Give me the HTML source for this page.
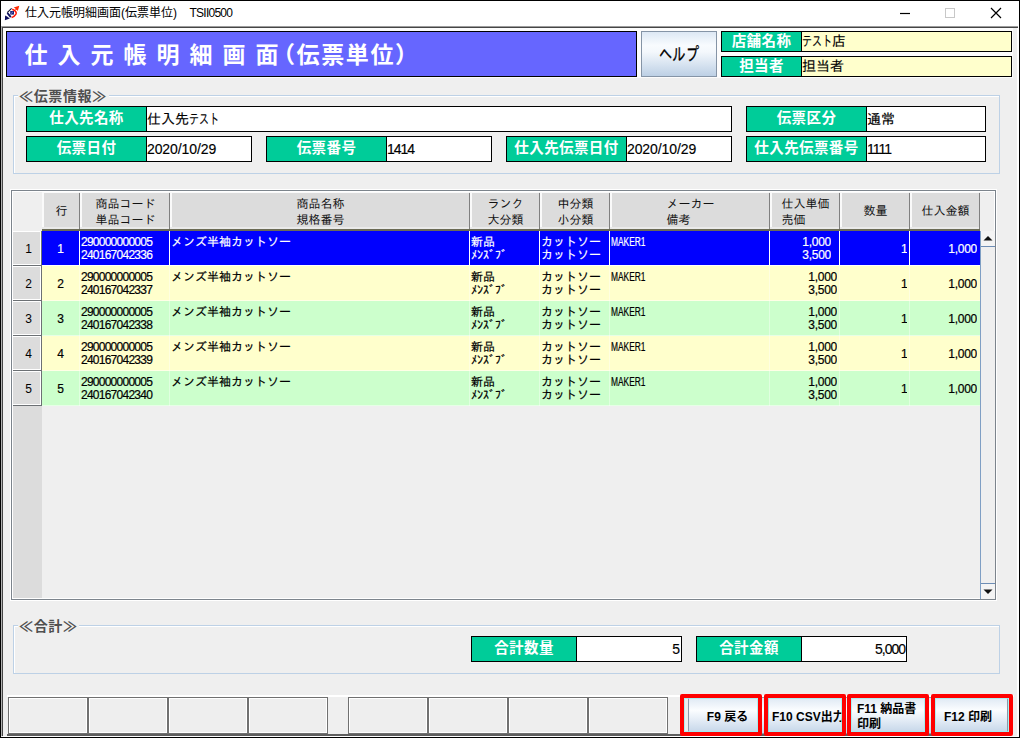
<!DOCTYPE html>
<html lang="ja">
<head>
<meta charset="utf-8">
<title>仕入元帳明細画面(伝票単位) TSII0500</title>
<style>
html,body{margin:0;padding:0;}
body{width:1020px;height:738px;position:relative;overflow:hidden;background:#efefef;
 font-family:"Liberation Sans","IPAGothic","Noto Sans CJK JP",sans-serif;font-size:12px;color:#000;}
.a{position:absolute;box-sizing:border-box;}
.ui{font-family:"Liberation Sans","Noto Sans CJK JP",sans-serif;}
.g{font-family:"Liberation Sans","IPAGothic",sans-serif;}
#ttext{left:25px;top:1px;height:25px;line-height:25px;font-size:12px;white-space:pre;}
.bt{top:1px;height:44px;line-height:45px;font-size:23px;font-weight:bold;color:#fff;white-space:nowrap;
 font-family:"Liberation Sans","Noto Sans CJK JP",sans-serif;}
.lab{background:#00cc99;border:1px solid #000;color:#fff;font-weight:bold;font-size:14.5px;text-align:center;
 font-family:"Liberation Sans","Noto Sans CJK JP",sans-serif;white-space:nowrap;overflow:hidden;letter-spacing:0.4px;}
.val{background:#fff;border:1px solid #000;border-left:none;font-size:14px;-webkit-text-stroke:0.15px;white-space:nowrap;overflow:hidden;
 font-family:"Liberation Sans","IPAGothic",sans-serif;}
.fs{border:1px solid #bdd1e6;}
.leg{background:#efefef;color:#505050;font-weight:bold;font-size:14px;letter-spacing:0.65px;white-space:nowrap;line-height:16px;height:16px;
 font-family:"Liberation Sans","Noto Sans CJK JP",sans-serif;}
.hd{background:#dcdcdc;text-align:center;font-size:12px;line-height:16px;color:#111;
 font-family:"Liberation Sans","IPAGothic",sans-serif;white-space:nowrap;overflow:hidden;}
.rh{background:#dcdcdc;text-align:center;font-size:12px;line-height:36px;padding-left:3px;border-bottom:1px solid #6c7074;border-right:1px solid #6c7074;box-shadow:inset 0 1px 0 #fff, inset -1px -1px 0 #fff;}
.c{font-size:12px;line-height:13px;white-space:nowrap;overflow:hidden;-webkit-text-stroke:0.2px;
 font-family:"Liberation Sans","IPAGothic",sans-serif;}
.num{letter-spacing:-0.75px;}
.num2{letter-spacing:-0.25px;}
.r{text-align:right;}
.fb{border:1px solid #707070;background:#eeeeee;box-shadow:inset 1px 1px 0 #fff, inset -1px -1px 0 #fff;}
.ab{border:1px solid #8a9aaa;background:linear-gradient(#dfe9f4 0%,#fbfdff 35%,#e6eef7 60%,#c4d5e8 100%);
 font-family:"Liberation Sans","Noto Sans CJK JP",sans-serif;font-weight:bold;font-size:12px;}
.red{border:4px solid #ff0000;border-radius:2px;box-shadow:inset 0 0 0 1px rgba(150,240,240,0.75);}
.k{display:inline-block;transform:scaleX(0.72);transform-origin:0 50%;white-space:nowrap;}
.m{display:inline-block;transform:scaleX(0.70);transform-origin:0 50%;white-space:nowrap;}
</style>
</head>
<body>
<div class="a " style="left:0px;top:0px;width:1020px;height:738px;background:#000;"></div>
<div class="a " style="left:1px;top:1px;width:1018px;height:25px;background:#fff;"></div>
<div class="a " style="left:1px;top:26px;width:1018px;height:711px;background:#efefef;"></div>
<div class="a " style="left:1px;top:26px;width:1017px;height:1px;background:#9c9c9c;"></div>
<div class="a " style="left:2px;top:27px;width:1016px;height:1px;background:#454545;"></div>
<div class="a " style="left:1px;top:26px;width:1px;height:710px;background:#b0b0b0;"></div>
<div class="a " style="left:2px;top:27px;width:1px;height:709px;background:#454545;"></div>
<div class="a " style="left:3px;top:28px;width:1010px;height:50px;background:#fcfcfc;"></div>
<div class="a " style="left:1017px;top:28px;width:2px;height:709px;background:#fff;"></div>
<div class="a " style="left:1018px;top:26px;width:1px;height:2px;background:#fff;"></div>
<div class="a " style="left:3px;top:736px;width:1015px;height:1px;background:#fff;"></div>
<svg class="a" style="left:0px;top:0px" width="26" height="26" viewBox="0 0 26 26">
<path d="M12.2 9.3 Q17.6 11.6 15.8 14.4 Q14.2 16.9 11.6 17.6" fill="none" stroke="#ff1400" stroke-width="1.5"/>
<path d="M19.3 5.7 L13.6 7.4 L15.6 8.6 L14.8 9.6 L17 10 L17.8 11 Z" fill="#ff2a00"/>
<path d="M11.6 8.4 L7.2 12.6" fill="none" stroke="#101030" stroke-width="1.1"/>
<path d="M7.4 13 L10.8 17.2" fill="none" stroke="#0c0c5c" stroke-width="1.9"/>
<path d="M4.9 20.2 L5.1 15.6 L7 16.6 L9.8 18.6 Z" fill="#0c0c5c"/>
<rect x="10.2" y="11" width="3.8" height="3.6" fill="#1a237e"/>
<path d="M11 13.6 L13 11.8" stroke="#8890d0" stroke-width="0.8"/>
</svg>
<div class="a ui" id="ttext">仕入元帳明細画面(伝票単位)</div>
<div class="a ui" style="left:189.5px;top:1px;height:25px;line-height:25px;font-size:12px;letter-spacing:-0.75px;">TSII0500</div>
<svg class="a" style="left:890px;top:1px" width="128" height="25" viewBox="0 0 128 25">
<path d="M10 12.5 H20" stroke="#000" stroke-width="1.2"/>
<rect x="55.5" y="7.5" width="9" height="9" fill="none" stroke="#c8c8c8" stroke-width="1"/>
<path d="M101 7 L111 17 M111 7 L101 17" stroke="#000" stroke-width="1.2"/>
</svg>
<div class="a" style="left:6px;top:31px;width:631px;height:46px;background:#6666ff;border:1px solid #000;">
<div class="a bt" style="left:17.5px;letter-spacing:1.8px;white-space:pre;">仕 入 元 帳 明 細 画 面</div>
<div class="a bt" style="left:265px;letter-spacing:1.6px;">（伝票単位）</div>
</div>
<div class="a" style="left:641px;top:31px;width:76px;height:46px;border:1px solid #8594a6;background:linear-gradient(#dde8f4 0%,#f8fbfe 30%,#f4f8fc 45%,#dbe6f2 70%,#bdd0e5 100%);text-align:center;line-height:45px;font-size:18.5px;font-family:'Liberation Sans','IPAGothic',sans-serif;-webkit-text-stroke:0.3px;"><span style="display:inline-block;width:40px;text-align:left;"><span class="k" style="width:40px;">ヘルプ</span></span></div>
<div class="a lab" style="left:721px;top:31px;width:81px;height:21px;line-height:18px;">店舗名称</div>
<div class="a val" style="left:802px;top:31px;width:210px;height:21px;line-height:19px;background:#ffffcc;font-size:14px;"><span class="k" style="width:30px;">テスト</span>店</div>
<div class="a lab" style="left:721px;top:56px;width:81px;height:21px;line-height:18px;">担当者</div>
<div class="a val" style="left:802px;top:56px;width:210px;height:21px;line-height:19px;background:#ffffcc;">担当者</div>
<div class="a fs" style="left:13px;top:95px;width:987px;height:79px;"></div>
<div class="a " style="left:14px;top:96px;width:985px;height:77px;border:1px solid #fff;border-right:none;border-bottom:none;"></div>
<div class="a leg" style="left:18px;top:88px;width:91px;height:16px;padding-left:1px;">≪伝票情報≫</div>
<div class="a lab" style="left:26px;top:106px;width:121px;height:26px;line-height:23px;">仕入先名称</div>
<div class="a val" style="left:147px;top:106px;width:585px;height:26px;line-height:24px;">仕入先<span class="k" style="width:30px;">テスト</span></div>
<div class="a lab" style="left:746px;top:106px;width:121px;height:26px;line-height:23px;">伝票区分</div>
<div class="a val" style="left:867px;top:106px;width:119px;height:26px;line-height:24px;">通常</div>
<div class="a lab" style="left:26px;top:136px;width:121px;height:26px;line-height:23px;">伝票日付</div>
<div class="a val" style="left:147px;top:136px;width:105px;height:26px;line-height:24px;letter-spacing:-0.1px;">2020/10/29</div>
<div class="a lab" style="left:266px;top:136px;width:121px;height:26px;line-height:23px;">伝票番号</div>
<div class="a val" style="left:387px;top:136px;width:105px;height:26px;line-height:24px;letter-spacing:-1px;">1414</div>
<div class="a lab" style="left:506px;top:136px;width:121px;height:26px;line-height:23px;">仕入先伝票日付</div>
<div class="a val" style="left:627px;top:136px;width:105px;height:26px;line-height:24px;letter-spacing:-0.1px;">2020/10/29</div>
<div class="a lab" style="left:746px;top:136px;width:121px;height:26px;line-height:23px;">仕入先伝票番号</div>
<div class="a val" style="left:867px;top:136px;width:119px;height:26px;line-height:24px;letter-spacing:-1px;">1111</div>
<div class="a " style="left:10px;top:189px;width:987px;height:412px;background:#fff;"></div>
<div class="a " style="left:11px;top:190px;width:985px;height:410px;border:1px solid #7c848c;background:#efefef;"></div>
<div class="a " style="left:12px;top:191px;width:983px;height:408px;border:1px solid #fff;"></div>
<div class="a " style="left:13px;top:192px;width:29px;height:39px;background:#efefef;"></div>
<div class="a " style="left:42px;top:192px;width:37px;height:37px;background:linear-gradient(#fafafa 0,#fafafa 35px,#eaeaea 35px);"></div>
<div class="a hd" style="left:44px;top:193px;width:35px;height:34px;line-height:37px;">行</div>
<div class="a " style="left:79px;top:193px;width:1px;height:36px;background:#808080;"></div>
<div class="a " style="left:80px;top:192px;width:89px;height:37px;background:linear-gradient(#fafafa 0,#fafafa 35px,#eaeaea 35px);"></div>
<div class="a hd" style="left:82px;top:193px;width:87px;height:34px;padding-top:3px;"><span style="display:inline-block;text-align:left;">商品コード<br>単品コード</span></div>
<div class="a " style="left:169px;top:193px;width:1px;height:36px;background:#808080;"></div>
<div class="a " style="left:170px;top:192px;width:299px;height:37px;background:linear-gradient(#fafafa 0,#fafafa 35px,#eaeaea 35px);"></div>
<div class="a hd" style="left:172px;top:193px;width:297px;height:34px;padding-top:3px;"><span style="display:inline-block;text-align:left;">商品名称<br>規格番号</span></div>
<div class="a " style="left:469px;top:193px;width:1px;height:36px;background:#808080;"></div>
<div class="a " style="left:470px;top:192px;width:69px;height:37px;background:linear-gradient(#fafafa 0,#fafafa 35px,#eaeaea 35px);"></div>
<div class="a hd" style="left:472px;top:193px;width:67px;height:34px;padding-top:3px;"><span style="display:inline-block;text-align:left;">ランク<br>大分類</span></div>
<div class="a " style="left:539px;top:193px;width:1px;height:36px;background:#808080;"></div>
<div class="a " style="left:540px;top:192px;width:69px;height:37px;background:linear-gradient(#fafafa 0,#fafafa 35px,#eaeaea 35px);"></div>
<div class="a hd" style="left:542px;top:193px;width:67px;height:34px;padding-top:3px;"><span style="display:inline-block;text-align:left;">中分類<br>小分類</span></div>
<div class="a " style="left:609px;top:193px;width:1px;height:36px;background:#808080;"></div>
<div class="a " style="left:610px;top:192px;width:159px;height:37px;background:linear-gradient(#fafafa 0,#fafafa 35px,#eaeaea 35px);"></div>
<div class="a hd" style="left:612px;top:193px;width:157px;height:34px;padding-top:3px;"><span style="display:inline-block;text-align:left;">メーカー<br>備考</span></div>
<div class="a " style="left:769px;top:193px;width:1px;height:36px;background:#808080;"></div>
<div class="a " style="left:770px;top:192px;width:69px;height:37px;background:linear-gradient(#fafafa 0,#fafafa 35px,#eaeaea 35px);"></div>
<div class="a hd" style="left:772px;top:193px;width:67px;height:34px;padding-top:3px;"><span style="display:inline-block;text-align:left;">仕入単価<br>売価</span></div>
<div class="a " style="left:839px;top:193px;width:1px;height:36px;background:#808080;"></div>
<div class="a " style="left:840px;top:192px;width:69px;height:37px;background:linear-gradient(#fafafa 0,#fafafa 35px,#eaeaea 35px);"></div>
<div class="a hd" style="left:842px;top:193px;width:67px;height:34px;line-height:37px;">数量</div>
<div class="a " style="left:909px;top:193px;width:1px;height:36px;background:#808080;"></div>
<div class="a " style="left:910px;top:192px;width:69px;height:37px;background:linear-gradient(#fafafa 0,#fafafa 35px,#eaeaea 35px);"></div>
<div class="a hd" style="left:912px;top:193px;width:67px;height:34px;line-height:37px;">仕入金額</div>
<div class="a " style="left:979px;top:193px;width:1px;height:36px;background:#808080;"></div>
<div class="a " style="left:42px;top:229px;width:938px;height:2px;background:#6b6b55;"></div>
<div class="a " style="left:980px;top:192px;width:14px;height:39px;background:#efefef;"></div>
<div class="a rh" style="left:13px;top:231px;width:29px;height:35px;">1</div>
<div class="a " style="left:42px;top:231px;width:938px;height:35px;background:#0000ff;"></div>
<div class="a " style="left:42px;top:265px;width:938px;height:1px;background:#fff;"></div>
<div class="a c" style="left:42px;top:236px;width:37px;height:28px;color:#fff;text-align:center;line-height:26px;">1</div>
<div class="a c num" style="left:81px;top:236px;width:88px;height:28px;color:#fff;">290000000005<br>240167042336</div>
<div class="a c" style="left:171px;top:236px;width:298px;height:28px;color:#fff;">メンズ半袖カットソー</div>
<div class="a c" style="left:471px;top:236px;width:68px;height:28px;color:#fff;">新品<br>ﾒﾝｽﾞﾌﾞ</div>
<div class="a c" style="left:541px;top:236px;width:68px;height:28px;color:#fff;">カットソー<br>カットソー</div>
<div class="a c" style="left:611px;top:236px;width:158px;height:28px;color:#fff;"><span class="m">MAKER1</span></div>
<div class="a c num2 r" style="left:771px;top:236px;width:60px;height:28px;color:#fff;">1,000<br>3,500</div>
<div class="a c num r" style="left:841px;top:236px;width:66px;height:28px;color:#fff;line-height:26px;">1</div>
<div class="a c num2 r" style="left:911px;top:236px;width:66px;height:28px;color:#fff;line-height:26px;">1,000</div>
<div class="a " style="left:79px;top:231px;width:1px;height:35px;background:#fff;"></div>
<div class="a " style="left:169px;top:231px;width:1px;height:35px;background:#fff;"></div>
<div class="a " style="left:469px;top:231px;width:1px;height:35px;background:#fff;"></div>
<div class="a " style="left:539px;top:231px;width:1px;height:35px;background:#fff;"></div>
<div class="a " style="left:609px;top:231px;width:1px;height:35px;background:#fff;"></div>
<div class="a " style="left:769px;top:231px;width:1px;height:35px;background:#fff;"></div>
<div class="a " style="left:839px;top:231px;width:1px;height:35px;background:#fff;"></div>
<div class="a " style="left:909px;top:231px;width:1px;height:35px;background:#fff;"></div>
<div class="a rh" style="left:13px;top:266px;width:29px;height:35px;">2</div>
<div class="a " style="left:42px;top:266px;width:938px;height:35px;background:#ffffcc;"></div>
<div class="a " style="left:42px;top:300px;width:938px;height:1px;background:rgba(255,255,255,0.5);"></div>
<div class="a c" style="left:42px;top:271px;width:37px;height:28px;color:#000;text-align:center;line-height:26px;">2</div>
<div class="a c num" style="left:81px;top:271px;width:88px;height:28px;color:#000;">290000000005<br>240167042337</div>
<div class="a c" style="left:171px;top:271px;width:298px;height:28px;color:#000;">メンズ半袖カットソー</div>
<div class="a c" style="left:471px;top:271px;width:68px;height:28px;color:#000;">新品<br>ﾒﾝｽﾞﾌﾞ</div>
<div class="a c" style="left:541px;top:271px;width:68px;height:28px;color:#000;">カットソー<br>カットソー</div>
<div class="a c" style="left:611px;top:271px;width:158px;height:28px;color:#000;"><span class="m">MAKER1</span></div>
<div class="a c num2 r" style="left:771px;top:271px;width:66px;height:28px;color:#000;">1,000<br>3,500</div>
<div class="a c num r" style="left:841px;top:271px;width:66px;height:28px;color:#000;line-height:26px;">1</div>
<div class="a c num2 r" style="left:911px;top:271px;width:66px;height:28px;color:#000;line-height:26px;">1,000</div>
<div class="a " style="left:79px;top:266px;width:1px;height:35px;background:rgba(255,255,255,0.4);"></div>
<div class="a " style="left:169px;top:266px;width:1px;height:35px;background:rgba(255,255,255,0.4);"></div>
<div class="a " style="left:469px;top:266px;width:1px;height:35px;background:rgba(255,255,255,0.4);"></div>
<div class="a " style="left:539px;top:266px;width:1px;height:35px;background:rgba(255,255,255,0.4);"></div>
<div class="a " style="left:609px;top:266px;width:1px;height:35px;background:rgba(255,255,255,0.4);"></div>
<div class="a " style="left:769px;top:266px;width:1px;height:35px;background:rgba(255,255,255,0.4);"></div>
<div class="a " style="left:839px;top:266px;width:1px;height:35px;background:rgba(255,255,255,0.4);"></div>
<div class="a " style="left:909px;top:266px;width:1px;height:35px;background:rgba(255,255,255,0.4);"></div>
<div class="a rh" style="left:13px;top:301px;width:29px;height:35px;">3</div>
<div class="a " style="left:42px;top:301px;width:938px;height:35px;background:#ccffcc;"></div>
<div class="a " style="left:42px;top:335px;width:938px;height:1px;background:rgba(255,255,255,0.5);"></div>
<div class="a c" style="left:42px;top:306px;width:37px;height:28px;color:#000;text-align:center;line-height:26px;">3</div>
<div class="a c num" style="left:81px;top:306px;width:88px;height:28px;color:#000;">290000000005<br>240167042338</div>
<div class="a c" style="left:171px;top:306px;width:298px;height:28px;color:#000;">メンズ半袖カットソー</div>
<div class="a c" style="left:471px;top:306px;width:68px;height:28px;color:#000;">新品<br>ﾒﾝｽﾞﾌﾞ</div>
<div class="a c" style="left:541px;top:306px;width:68px;height:28px;color:#000;">カットソー<br>カットソー</div>
<div class="a c" style="left:611px;top:306px;width:158px;height:28px;color:#000;"><span class="m">MAKER1</span></div>
<div class="a c num2 r" style="left:771px;top:306px;width:66px;height:28px;color:#000;">1,000<br>3,500</div>
<div class="a c num r" style="left:841px;top:306px;width:66px;height:28px;color:#000;line-height:26px;">1</div>
<div class="a c num2 r" style="left:911px;top:306px;width:66px;height:28px;color:#000;line-height:26px;">1,000</div>
<div class="a " style="left:79px;top:301px;width:1px;height:35px;background:rgba(255,255,255,0.4);"></div>
<div class="a " style="left:169px;top:301px;width:1px;height:35px;background:rgba(255,255,255,0.4);"></div>
<div class="a " style="left:469px;top:301px;width:1px;height:35px;background:rgba(255,255,255,0.4);"></div>
<div class="a " style="left:539px;top:301px;width:1px;height:35px;background:rgba(255,255,255,0.4);"></div>
<div class="a " style="left:609px;top:301px;width:1px;height:35px;background:rgba(255,255,255,0.4);"></div>
<div class="a " style="left:769px;top:301px;width:1px;height:35px;background:rgba(255,255,255,0.4);"></div>
<div class="a " style="left:839px;top:301px;width:1px;height:35px;background:rgba(255,255,255,0.4);"></div>
<div class="a " style="left:909px;top:301px;width:1px;height:35px;background:rgba(255,255,255,0.4);"></div>
<div class="a rh" style="left:13px;top:336px;width:29px;height:35px;">4</div>
<div class="a " style="left:42px;top:336px;width:938px;height:35px;background:#ffffcc;"></div>
<div class="a " style="left:42px;top:370px;width:938px;height:1px;background:rgba(255,255,255,0.5);"></div>
<div class="a c" style="left:42px;top:341px;width:37px;height:28px;color:#000;text-align:center;line-height:26px;">4</div>
<div class="a c num" style="left:81px;top:341px;width:88px;height:28px;color:#000;">290000000005<br>240167042339</div>
<div class="a c" style="left:171px;top:341px;width:298px;height:28px;color:#000;">メンズ半袖カットソー</div>
<div class="a c" style="left:471px;top:341px;width:68px;height:28px;color:#000;">新品<br>ﾒﾝｽﾞﾌﾞ</div>
<div class="a c" style="left:541px;top:341px;width:68px;height:28px;color:#000;">カットソー<br>カットソー</div>
<div class="a c" style="left:611px;top:341px;width:158px;height:28px;color:#000;"><span class="m">MAKER1</span></div>
<div class="a c num2 r" style="left:771px;top:341px;width:66px;height:28px;color:#000;">1,000<br>3,500</div>
<div class="a c num r" style="left:841px;top:341px;width:66px;height:28px;color:#000;line-height:26px;">1</div>
<div class="a c num2 r" style="left:911px;top:341px;width:66px;height:28px;color:#000;line-height:26px;">1,000</div>
<div class="a " style="left:79px;top:336px;width:1px;height:35px;background:rgba(255,255,255,0.4);"></div>
<div class="a " style="left:169px;top:336px;width:1px;height:35px;background:rgba(255,255,255,0.4);"></div>
<div class="a " style="left:469px;top:336px;width:1px;height:35px;background:rgba(255,255,255,0.4);"></div>
<div class="a " style="left:539px;top:336px;width:1px;height:35px;background:rgba(255,255,255,0.4);"></div>
<div class="a " style="left:609px;top:336px;width:1px;height:35px;background:rgba(255,255,255,0.4);"></div>
<div class="a " style="left:769px;top:336px;width:1px;height:35px;background:rgba(255,255,255,0.4);"></div>
<div class="a " style="left:839px;top:336px;width:1px;height:35px;background:rgba(255,255,255,0.4);"></div>
<div class="a " style="left:909px;top:336px;width:1px;height:35px;background:rgba(255,255,255,0.4);"></div>
<div class="a rh" style="left:13px;top:371px;width:29px;height:35px;">5</div>
<div class="a " style="left:42px;top:371px;width:938px;height:35px;background:#ccffcc;"></div>
<div class="a " style="left:42px;top:405px;width:938px;height:1px;background:rgba(255,255,255,0.5);"></div>
<div class="a c" style="left:42px;top:376px;width:37px;height:28px;color:#000;text-align:center;line-height:26px;">5</div>
<div class="a c num" style="left:81px;top:376px;width:88px;height:28px;color:#000;">290000000005<br>240167042340</div>
<div class="a c" style="left:171px;top:376px;width:298px;height:28px;color:#000;">メンズ半袖カットソー</div>
<div class="a c" style="left:471px;top:376px;width:68px;height:28px;color:#000;">新品<br>ﾒﾝｽﾞﾌﾞ</div>
<div class="a c" style="left:541px;top:376px;width:68px;height:28px;color:#000;">カットソー<br>カットソー</div>
<div class="a c" style="left:611px;top:376px;width:158px;height:28px;color:#000;"><span class="m">MAKER1</span></div>
<div class="a c num2 r" style="left:771px;top:376px;width:66px;height:28px;color:#000;">1,000<br>3,500</div>
<div class="a c num r" style="left:841px;top:376px;width:66px;height:28px;color:#000;line-height:26px;">1</div>
<div class="a c num2 r" style="left:911px;top:376px;width:66px;height:28px;color:#000;line-height:26px;">1,000</div>
<div class="a " style="left:79px;top:371px;width:1px;height:35px;background:rgba(255,255,255,0.4);"></div>
<div class="a " style="left:169px;top:371px;width:1px;height:35px;background:rgba(255,255,255,0.4);"></div>
<div class="a " style="left:469px;top:371px;width:1px;height:35px;background:rgba(255,255,255,0.4);"></div>
<div class="a " style="left:539px;top:371px;width:1px;height:35px;background:rgba(255,255,255,0.4);"></div>
<div class="a " style="left:609px;top:371px;width:1px;height:35px;background:rgba(255,255,255,0.4);"></div>
<div class="a " style="left:769px;top:371px;width:1px;height:35px;background:rgba(255,255,255,0.4);"></div>
<div class="a " style="left:839px;top:371px;width:1px;height:35px;background:rgba(255,255,255,0.4);"></div>
<div class="a " style="left:909px;top:371px;width:1px;height:35px;background:rgba(255,255,255,0.4);"></div>
<div class="a " style="left:13px;top:406px;width:29px;height:192px;background:#dcdcdc;"></div>
<div class="a " style="left:980px;top:231px;width:1px;height:368px;background:#7f9fc4;"></div>
<div class="a " style="left:981px;top:231px;width:14px;height:368px;background:#efefef;"></div>
<div class="a " style="left:981px;top:231px;width:14px;height:16px;background:#f4f4f4;border-bottom:1px solid #6d8db5;"></div>
<svg class="a" style="left:981px;top:231px" width="14" height="15"><path d="M2.5 9.5 L7 5 L11.5 9.5 Z" fill="#111"/></svg>
<div class="a " style="left:981px;top:583px;width:14px;height:16px;background:#f4f4f4;border-top:1px solid #6d8db5;"></div>
<svg class="a" style="left:981px;top:584px" width="14" height="15"><path d="M2.5 5.5 L7 10 L11.5 5.5 Z" fill="#111"/></svg>
<div class="a fs" style="left:13px;top:625px;width:987px;height:49px;"></div>
<div class="a " style="left:14px;top:626px;width:985px;height:47px;border:1px solid #fff;border-right:none;border-bottom:none;"></div>
<div class="a leg" style="left:18px;top:618px;width:61px;height:16px;padding-left:1px;">≪合計≫</div>
<div class="a lab" style="left:471px;top:636px;width:106px;height:26px;line-height:23px;">合計数量</div>
<div class="a val" style="left:577px;top:636px;width:105px;height:26px;line-height:24px;text-align:right;padding-right:1px;">5</div>
<div class="a lab" style="left:696px;top:636px;width:106px;height:26px;line-height:23px;">合計金額</div>
<div class="a val" style="left:802px;top:636px;width:105px;height:26px;line-height:24px;text-align:right;padding-right:1px;letter-spacing:-1px;">5,000</div>
<div class="a " style="left:7px;top:695px;width:1007px;height:2px;background:#fff;"></div>
<div class="a " style="left:7px;top:734px;width:1002px;height:2px;background:#5f5f5f;"></div>
<div class="a fb" style="left:8px;top:697px;width:80px;height:37px;"></div>
<div class="a fb" style="left:88px;top:697px;width:80px;height:37px;"></div>
<div class="a fb" style="left:168px;top:697px;width:80px;height:37px;"></div>
<div class="a fb" style="left:248px;top:697px;width:80px;height:37px;"></div>
<div class="a fb" style="left:348px;top:697px;width:80px;height:37px;"></div>
<div class="a fb" style="left:428px;top:697px;width:80px;height:37px;"></div>
<div class="a fb" style="left:508px;top:697px;width:80px;height:37px;"></div>
<div class="a fb" style="left:588px;top:697px;width:80px;height:37px;"></div>
<div class="a ab" style="left:688px;top:697px;width:80px;height:37px;text-align:center;line-height:38px;padding-right:1px;">F9 戻る</div>
<div class="a ab" style="left:768px;top:697px;width:80px;height:37px;text-align:center;line-height:38px;white-space:nowrap;text-align:left;padding-left:3px;">F10 CSV出力</div>
<div class="a ab" style="left:848px;top:697px;width:80px;height:37px;text-align:center;line-height:38px;text-align:left;padding-left:8px;line-height:15px;padding-top:3.5px;">F11 納品書<br>印刷</div>
<div class="a ab" style="left:928px;top:697px;width:80px;height:37px;text-align:center;line-height:38px;">F12 印刷</div>
<div class="a red" style="left:680px;top:694px;width:82px;height:42px;"></div>
<div class="a red" style="left:764px;top:694px;width:82px;height:42px;"></div>
<div class="a red" style="left:847px;top:694px;width:82px;height:42px;"></div>
<div class="a red" style="left:931px;top:694px;width:82px;height:42px;"></div>
</body>
</html>
